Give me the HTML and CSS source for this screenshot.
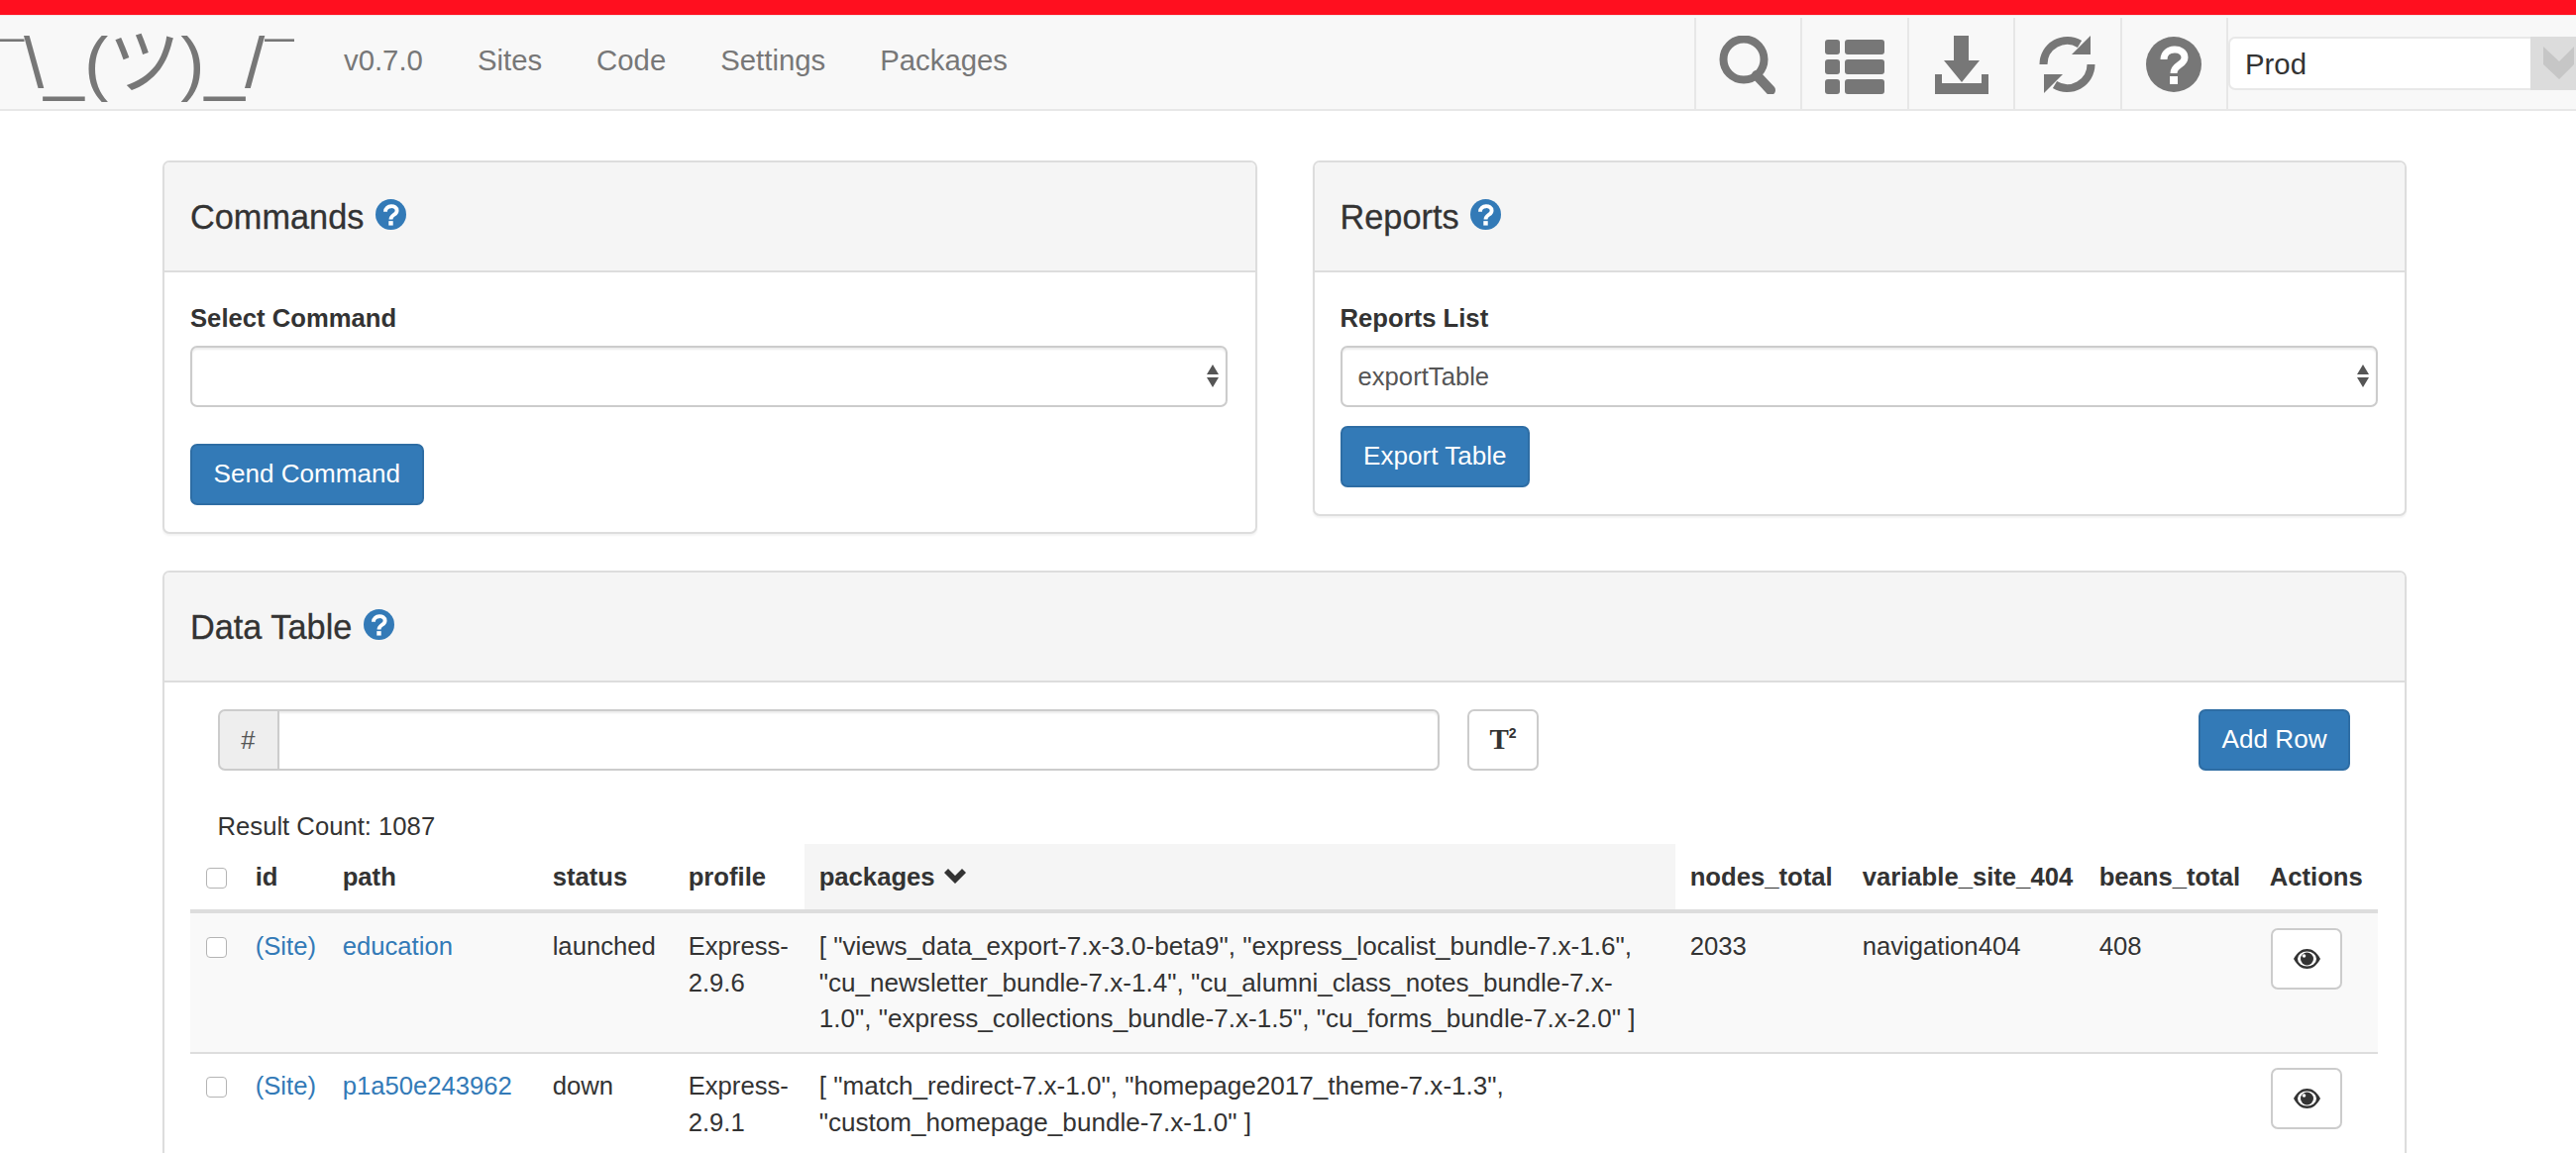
FILE: index.html
```html
<!DOCTYPE html>
<html lang="en">
<head>
  <meta charset="UTF-8">
  <title>Atlas</title>
  <link rel="stylesheet" href="styles.css">
</head>
<body>

  <svg class="icon-defs" width="0" height="0">
    <symbol id="help" viewBox="0 0 56 56">
      <circle cx="28" cy="28" r="28" fill="currentColor"/>
      <path d="M18 23 C18 10 39 10 39 21 C39 29 28 28 28 37" fill="none" stroke="#fff" stroke-width="7"/>
      <rect x="24" y="40" width="8" height="8" fill="#fff"/>
    </symbol>
    <symbol id="eye" viewBox="0 0 27 20">
      <path d="M0 10 C4 3 8 0 13.5 0 C19 0 23 3 27 10 C23 17 19 20 13.5 20 C8 20 4 17 0 10 Z" fill="#333"/>
      <ellipse cx="13.5" cy="10" rx="9.5" ry="7.5" fill="#fff"/>
      <circle cx="13.5" cy="10" r="6.5" fill="#333"/>
      <circle cx="10.5" cy="7" r="1.8" fill="#fff"/>
    </symbol>
  </svg>

  <div class="top-stripe"></div>

  <nav class="navbar">
    <a class="brand"><span class="macron">¯</span>\_(ツ)_/<span class="macron">¯</span></a>
    <ul class="nav-links">
      <li>v0.7.0</li>
      <li>Sites</li>
      <li>Code</li>
      <li>Settings</li>
      <li>Packages</li>
    </ul>
    <ul class="nav-icons">
      <li>
        <svg class="nav-icon" width="60" height="59" viewBox="0 0 60 59">
          <circle cx="25" cy="24" r="20.5" fill="none" stroke="#777" stroke-width="8"/>
          <path d="M38 40 L52 55" stroke="#777" stroke-width="10" stroke-linecap="round"/>
        </svg>
      </li>
      <li>
        <svg class="nav-icon" width="60" height="55" viewBox="0 0 60 55">
          <rect x="0" y="0" width="15" height="15" rx="3" fill="#777"/>
          <rect x="20" y="0" width="40" height="15" rx="3" fill="#777"/>
          <rect x="0" y="20" width="15" height="15" rx="3" fill="#777"/>
          <rect x="20" y="20" width="40" height="15" rx="3" fill="#777"/>
          <rect x="0" y="40" width="15" height="15" rx="3" fill="#777"/>
          <rect x="20" y="40" width="40" height="15" rx="3" fill="#777"/>
        </svg>
      </li>
      <li>
        <svg class="nav-icon" width="54" height="59" viewBox="0 0 54 59">
          <path d="M19 0 H34 V25 H45 L27 47 L9 25 H19 Z" fill="#777"/>
          <path d="M0 39 H7 V48 H47 V39 H54 V59 H0 Z" fill="#777"/>
        </svg>
      </li>
      <li>
        <svg class="nav-icon" width="57" height="58" viewBox="0 0 57 58">
          <g id="refresh-half">
            <path d="M4.5 29 A24 24 0 0 1 41 8.5" fill="none" stroke="#777" stroke-width="8"/>
            <path d="M52 0 V19 H33 Z" fill="#777"/>
          </g>
          <use href="#refresh-half" transform="rotate(180 28.5 29)"/>
        </svg>
      </li>
      <li>
        <svg class="nav-icon nav-help" width="56" height="56"><use href="#help"/></svg>
      </li>
    </ul>
    <div class="env-select">
      <select class="env-input">
        <option>Prod</option>
      </select>
      <span class="env-arrow">
        <svg width="44" height="54" viewBox="0 0 44 54">
          <path d="M13 10 L29 25 L44 10 V28 L29 43 L13 28 Z" fill="#c6c6c6"/>
        </svg>
      </span>
    </div>
  </nav>

  <div class="container">
    <div class="panel-row">
      <section class="panel">
        <div class="panel-heading">
          <h3>Commands <svg class="help-icon"><use href="#help"/></svg></h3>
        </div>
        <div class="panel-body">
          <label class="field-label">Select Command</label>
          <div class="select-wrap commands-select">
            <select class="form-control"><option></option></select>
            <svg class="select-arrows" width="12" height="23" viewBox="0 0 12 23">
              <path d="M6 0 L12 10 H0 Z M0 13 H12 L6 23 Z" fill="#555"/>
            </svg>
          </div>
          <button class="btn btn-primary">Send Command</button>
        </div>
      </section>

      <section class="panel">
        <div class="panel-heading">
          <h3>Reports <svg class="help-icon"><use href="#help"/></svg></h3>
        </div>
        <div class="panel-body">
          <label class="field-label">Reports List</label>
          <div class="select-wrap reports-select">
            <select class="form-control"><option>exportTable</option></select>
            <svg class="select-arrows" width="12" height="23" viewBox="0 0 12 23">
              <path d="M6 0 L12 10 H0 Z M0 13 H12 L6 23 Z" fill="#555"/>
            </svg>
          </div>
          <button class="btn btn-primary">Export Table</button>
        </div>
      </section>
    </div>

    <section class="panel">
      <div class="panel-heading">
        <h3>Data Table <svg class="help-icon"><use href="#help"/></svg></h3>
      </div>
      <div class="panel-body table-body">
        <div class="table-tools">
          <div class="input-group">
            <span class="input-addon">#</span>
            <input class="input-field" type="text">
          </div>
          <button class="btn btn-default btn-super">T<sup>2</sup></button>
          <button class="btn btn-primary btn-add">Add Row</button>
        </div>
        <p class="result-count">Result Count: 1087</p>

        <table class="data-table">
          <colgroup>
            <col class="col-check">
            <col class="col-id">
            <col class="col-path">
            <col class="col-status">
            <col class="col-profile">
            <col class="col-packages">
            <col class="col-nodes">
            <col class="col-variable">
            <col class="col-beans">
            <col class="col-actions">
          </colgroup>
          <thead>
            <tr>
              <th><span class="checkbox"></span></th>
              <th>id</th>
              <th>path</th>
              <th>status</th>
              <th>profile</th>
              <th class="sorted">packages
                <svg class="sort-icon" width="22" height="15" viewBox="0 0 22 15">
                  <path d="M0 4 L4 0 L11 7 L18 0 L22 4 L11 15 Z" fill="#333"/>
                </svg>
              </th>
              <th>nodes_total</th>
              <th>variable_site_404</th>
              <th>beans_total</th>
              <th>Actions</th>
            </tr>
          </thead>
          <tbody>
            <tr class="striped">
              <td><span class="checkbox"></span></td>
              <td><a>(Site)</a></td>
              <td><a>education</a></td>
              <td>launched</td>
              <td>Express-2.9.6</td>
              <td class="packages-cell">[ "views_data_export-7.x-3.0-beta9", "express_localist_bundle-7.x-1.6", "cu_newsletter_bundle-7.x-1.4", "cu_alumni_class_notes_bundle-7.x-1.0", "express_collections_bundle-7.x-1.5", "cu_forms_bundle-7.x-2.0" ]</td>
              <td>2033</td>
              <td>navigation404</td>
              <td>408</td>
              <td><button class="btn btn-default btn-view"><svg width="27" height="20"><use href="#eye"/></svg></button></td>
            </tr>
            <tr>
              <td><span class="checkbox"></span></td>
              <td><a>(Site)</a></td>
              <td><a>p1a50e243962</a></td>
              <td>down</td>
              <td>Express-2.9.1</td>
              <td class="packages-cell">[ "match_redirect-7.x-1.0", "homepage2017_theme-7.x-1.3", "custom_homepage_bundle-7.x-1.0" ]</td>
              <td></td>
              <td></td>
              <td></td>
              <td><button class="btn btn-default btn-view"><svg width="27" height="20"><use href="#eye"/></svg></button></td>
            </tr>
          </tbody>
        </table>
      </div>
    </section>
  </div>

</body>
</html>
```

FILE: styles.css
```css
* {
  box-sizing: border-box;
}

html, body {
  height: 100%;
  overflow: hidden;
}

body {
  margin: 0;
  font-family: "Liberation Sans", Arial, sans-serif;
  font-size: 25.67px;
  line-height: 36.67px;
  color: #333;
  background: #fff;
}

.icon-defs {
  position: absolute;
}

.top-stripe {
  height: 15px;
  background: #ff0f1f;
}

.navbar {
  display: flex;
  height: 97px;
  background: #f8f8f8;
  border-top: 1px solid #f3e4e4;
  border-bottom: 2px solid #e7e7e7;
  color: #777;
}

.brand {
  flex: none;
  width: 324.5px;
  margin-left: -5px;
  font-family: "Liberation Sans", "Noto Sans CJK JP", sans-serif;
  font-size: 73px;
  line-height: 94px;
  white-space: nowrap;
}

.macron {
  font-family: "Liberation Serif", serif;
  font-size: 58px;
  vertical-align: 5px;
}

.nav-links {
  display: flex;
  flex: 1;
  margin: 0;
  padding: 0;
  list-style: none;
  font-size: 29.33px;
  line-height: 89px;
}

.nav-links li {
  padding: 0 27.5px;
}

.nav-icons {
  display: flex;
  margin: 2px 0 0;
  padding: 0;
  border-right: 2px solid #e7e7e7;
  list-style: none;
}

.nav-icons li {
  display: flex;
  justify-content: center;
  width: 107.4px;
  padding-top: 18px;
  border-left: 2px solid #e7e7e7;
}

.nav-icon {
  display: block;
}

.nav-icons li:nth-child(2) .nav-icon {
  margin-top: 4px;
}

.nav-help {
  margin-top: 1px;
  color: #777;
}

.env-select {
  position: relative;
  flex: none;
  width: 351px;
  height: 54px;
  margin: 21px 0 0;
}

.env-input {
  display: block;
  width: 100%;
  height: 54px;
  padding: 0 15px;
  appearance: none;
  background: #fff;
  border: 2px solid #e8e8e8;
  border-radius: 7px;
  font-family: inherit;
  font-size: 29.33px;
  color: #333;
}

.env-arrow {
  position: absolute;
  top: 0;
  left: 305px;
  width: 46px;
  height: 54px;
  background: #dcdcdc;
}

.container {
  width: 2265px;
  margin-left: 164px;
  padding-top: 50px;
}

.panel-row {
  display: flex;
  align-items: flex-start;
  gap: 56px;
}

.panel-row .panel {
  flex: 1;
}

.panel {
  margin-bottom: 37px;
  background: #fff;
  border: 2px solid #ddd;
  border-radius: 7px;
  box-shadow: 0 2px 2px rgba(0, 0, 0, 0.05);
}

.panel-heading {
  height: 111px;
  padding: 0 26px;
  background: #f5f5f5;
  border-bottom: 2px solid #ddd;
  border-radius: 5px 5px 0 0;
}

.panel-heading h3 {
  margin: 0;
  font-size: 34.3px;
  font-weight: 400;
  line-height: 110px;
  -webkit-text-stroke: 0.3px #333;
}

.help-icon {
  width: 31px;
  height: 31px;
  margin-left: 2px;
  color: #337ab7;
  vertical-align: -1px;
}

.panel-body {
  padding: 28px 27.5px 27.5px 26px;
}

.field-label {
  display: block;
  margin-bottom: 9px;
  font-weight: 700;
}

.select-wrap {
  position: relative;
}

.commands-select {
  margin-bottom: 37px;
}

.reports-select {
  margin-bottom: 19px;
}

.form-control {
  display: block;
  width: 100%;
  height: 62px;
  padding: 0 16px;
  appearance: none;
  background: #fff;
  border: 2px solid #ccc;
  border-radius: 7px;
  box-shadow: inset 0 2px 2px rgba(0, 0, 0, 0.075);
  font-family: inherit;
  font-size: 25.67px;
  color: #555;
}

.select-arrows {
  position: absolute;
  top: 19px;
  right: 9px;
}

.btn {
  display: inline-block;
  height: 62px;
  padding: 0 21.5px;
  border: 2px solid transparent;
  border-radius: 7px;
  font-family: inherit;
  font-size: 26.1px;
  cursor: pointer;
}

.btn-primary {
  color: #fff;
  background: #337ab7;
  border-color: #2e6da4;
}

.btn-default {
  color: #333;
  background: #fff;
  border-color: #ccc;
}

.table-body {
  padding-top: 26.5px;
}

.table-tools {
  display: flex;
  gap: 28px;
  padding: 0 27.5px;
}

.input-group {
  display: flex;
  width: 1233.5px;
  height: 62px;
}

.input-addon {
  flex: none;
  width: 62px;
  background: #eee;
  border: 2px solid #ccc;
  border-radius: 7px 0 0 7px;
  color: #555;
  text-align: center;
  line-height: 58px;
}

.input-field {
  flex: 1;
  min-width: 0;
  border: 2px solid #ccc;
  border-left: 0;
  border-radius: 0 7px 7px 0;
  box-shadow: inset 0 2px 2px rgba(0, 0, 0, 0.075);
}

.btn-super {
  width: 72px;
  padding: 0;
  font-family: "Liberation Serif", serif;
  font-size: 29px;
  font-weight: 700;
}

.btn-super sup {
  font-family: "Liberation Sans", sans-serif;
  font-size: 14px;
  line-height: 0;
}

.btn-add {
  margin-left: auto;
}

.result-count {
  margin: 38px 0 0;
  padding: 0 27.5px;
}

.data-table {
  width: 2208px;
  border-collapse: collapse;
  table-layout: fixed;
}

.col-check { width: 51px; }
.col-id { width: 88px; }
.col-path { width: 212px; }
.col-status { width: 137px; }
.col-profile { width: 132px; }
.col-packages { width: 879px; }
.col-nodes { width: 174px; }
.col-variable { width: 239px; }
.col-beans { width: 172px; }
.col-actions { width: 124px; }

.data-table th,
.data-table td {
  padding: 14.67px;
  text-align: left;
  vertical-align: top;
}

.data-table th {
  border-bottom: 4px solid #ddd;
  font-weight: 700;
  white-space: nowrap;
}

.data-table td {
  border-top: 2px solid #ddd;
}

.data-table tbody tr:first-child td {
  border-top: 0;
}

.data-table th.sorted {
  background: #f5f5f5;
}

.sort-icon {
  margin-left: 2px;
  vertical-align: 2px;
}

.striped td {
  background: #f9f9f9;
}

.data-table td.packages-cell {
  font-size: 26.1px;
}

.data-table a {
  color: #337ab7;
}

.checkbox {
  display: block;
  width: 21px;
  height: 21px;
  margin: 9px 0 0 1px;
  background: #fff;
  border: 1px solid #b4b4b4;
  border-radius: 4px;
}

.btn-view {
  display: block;
  width: 72px;
  margin-left: 1.5px;
  padding: 0;
}

.btn-view svg {
  display: block;
  margin: 0 auto;
}
```
